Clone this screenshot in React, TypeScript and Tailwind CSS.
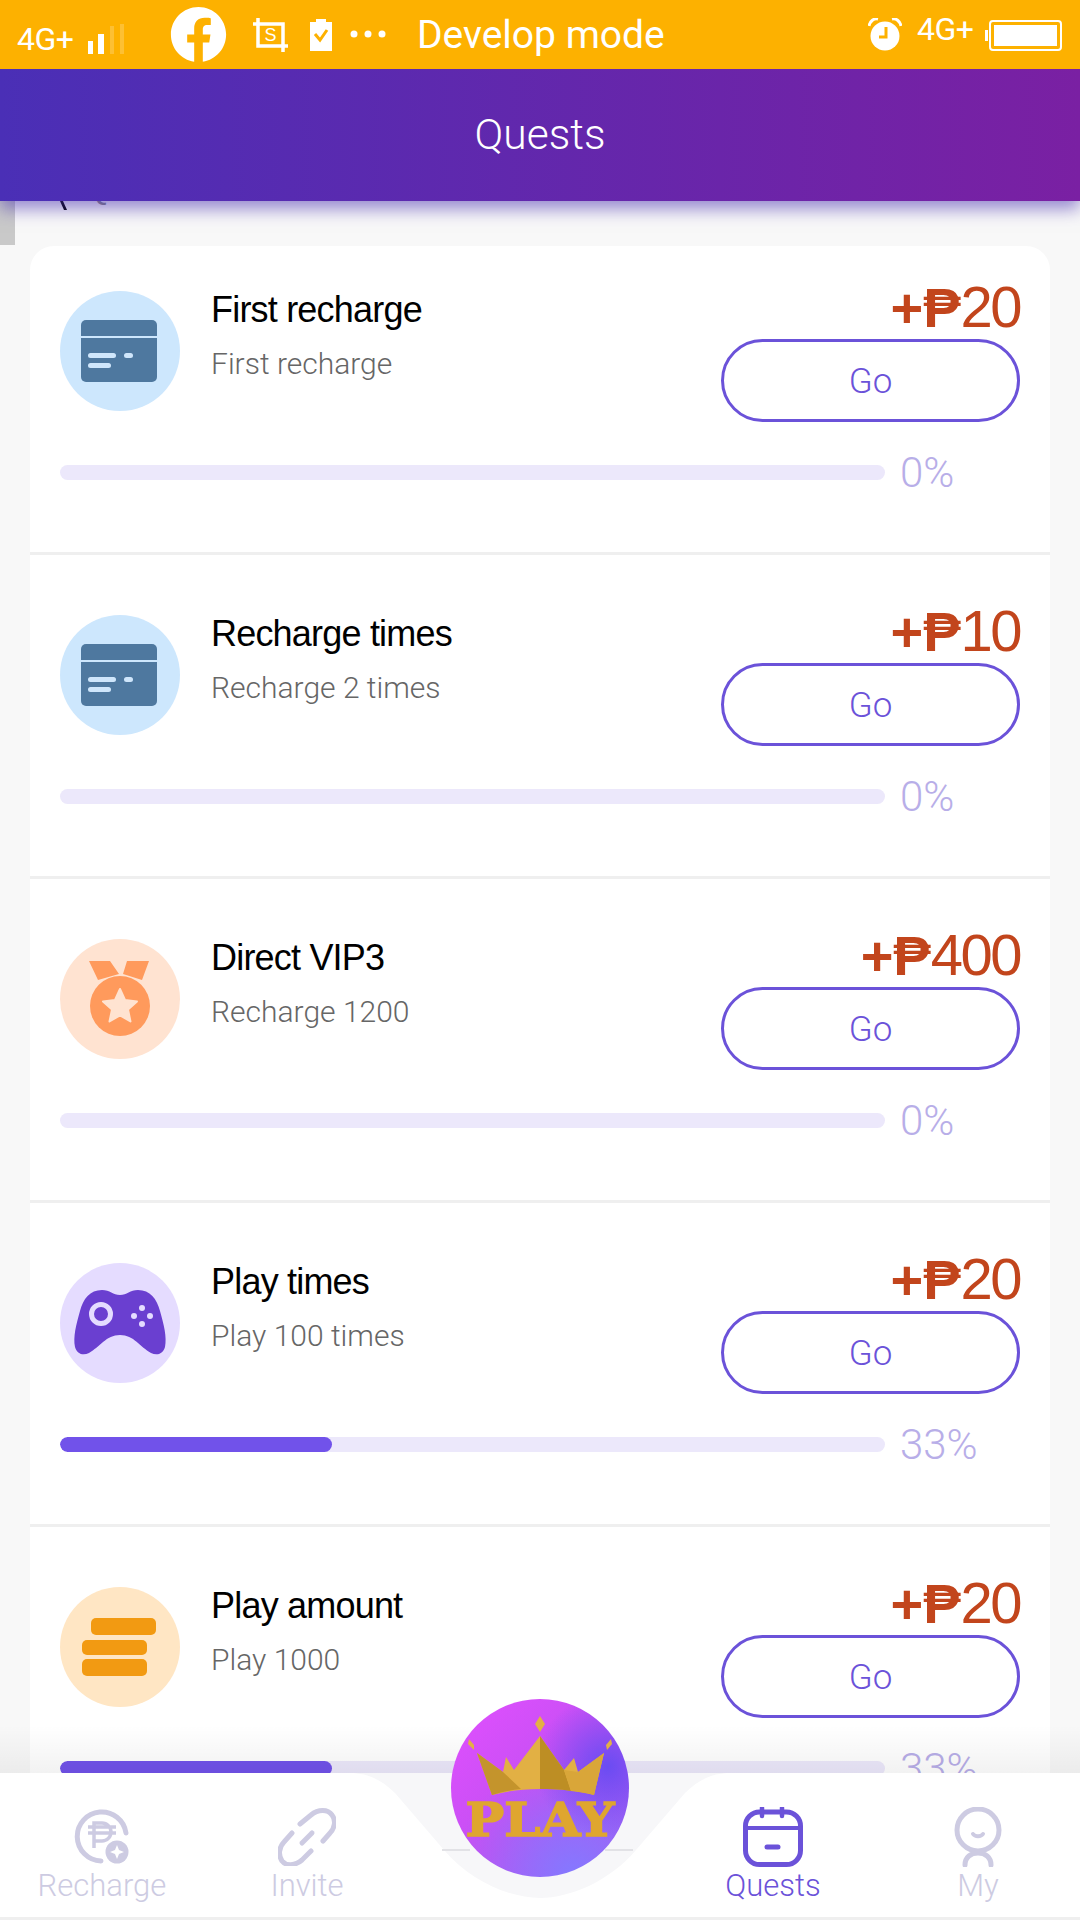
import React from "react";
import { FaFacebook } from "react-icons/fa";

const sans = "font-['Liberation_Sans',Arial,sans-serif]";
const light = "font-['Roboto','Liberation_Sans',sans-serif] font-light";

function CardIcon() {
  return (
    <svg viewBox="0 0 120 120" className="w-[120px] h-[120px]">
      <path d="M21 34a5 5 0 0 1 5-5h66a5 5 0 0 1 5 5v11H21z" fill="#4e789f" />
      <path d="M21 47h76v39a5 5 0 0 1-5 5H26a5 5 0 0 1-5-5z" fill="#4e789f" />
      <rect x="28" y="62" width="28" height="5" rx="2.500" fill="#cfe6fb" />
      <rect x="64" y="62" width="9" height="5" rx="2.500" fill="#cfe6fb" />
      <rect x="28" y="72" width="23" height="5" rx="2.500" fill="#cfe6fb" />
    </svg>
  );
}

function MedalIcon() {
  return (
    <svg viewBox="0 0 120 120" className="w-[120px] h-[120px]">
      <path d="M29 22h21l9 13-21 6zM67 22h22l-7 19-19-6z" fill="#ff9a5c" />
      <circle cx="60" cy="67" r="30" fill="#ff9a5c" />
      <path d="M60 50l5 11 12 1.500-9 8 2.500 12L60 76.500l-10.500 6 2.500-12-9-8 12-1.500z" fill="#ffe3d1" stroke="#ffe3d1" strokeWidth="2" strokeLinejoin="round" />
    </svg>
  );
}

function PadIcon() {
  return (
    <svg viewBox="0 0 120 120" className="w-[120px] h-[120px]">
      <path d="M42 27C50 27 53 32 60 32C67 32 70 27 78 27C90 27 97 36 100 48C104 62 107 74 105 84C103 91 97 93 91 90C80 84 74 72 60 72C46 72 40 84 29 90C23 93 17 91 15 84C13 74 16 62 20 48C23 36 30 27 42 27Z" fill="#6a3fd0" />
      <circle cx="41" cy="51" r="9.500" fill="#6a3fd0" stroke="#e5dcff" strokeWidth="5" />
      <circle cx="82" cy="45" r="3" fill="#e5dcff" />
      <circle cx="90" cy="53" r="3" fill="#e5dcff" />
      <circle cx="82" cy="61" r="3" fill="#e5dcff" />
      <circle cx="74" cy="53" r="3" fill="#e5dcff" />
    </svg>
  );
}

function StackIcon() {
  return (
    <svg viewBox="0 0 120 120" className="w-[120px] h-[120px]">
      <rect x="31" y="31" width="65" height="17" rx="5" fill="#f29a12" />
      <rect x="22" y="53" width="65" height="15" rx="5" fill="#f29a12" />
      <rect x="22" y="72" width="65" height="17" rx="5" fill="#f29a12" />
    </svg>
  );
}

type Task = { title: string; sub: string; amount: string; pct: number; bg: string; icon: React.ReactNode };

const tasks: Task[] = [
  { title: "First recharge", sub: "First recharge", amount: "20", pct: 0, bg: "bg-[#cde7fd]", icon: <CardIcon /> },
  { title: "Recharge times", sub: "Recharge 2 times", amount: "10", pct: 0, bg: "bg-[#cde7fd]", icon: <CardIcon /> },
  { title: "Direct VIP3", sub: "Recharge 1200", amount: "400", pct: 0, bg: "bg-[#ffe3d1]", icon: <MedalIcon /> },
  { title: "Play times", sub: "Play 100 times", amount: "20", pct: 33, bg: "bg-[#e5dcff]", icon: <PadIcon /> },
  { title: "Play amount", sub: "Play 1000", amount: "20", pct: 33, bg: "bg-[#ffe6c4]", icon: <StackIcon /> },
];

function TaskRow({ t, first }: { t: Task; first: boolean }) {
  return (
    <div className={`shrink-0 px-[30px] border-b-[3px] border-[#efefef] ${first ? "h-[309px] pt-[36px]" : "h-[324px] pt-[51px]"}`}>
      <div className="flex justify-between h-[140px]">
        <div className="flex items-start pt-[9px]">
          <div className={`w-[120px] h-[120px] rounded-full ${t.bg}`}>{t.icon}</div>
          <div className="ml-[31px]">
            <div className={`${sans} text-[36px] tracking-[-0.800px] leading-[40px] text-black mt-[-1px]`}>{t.title}</div>
            <div className={`${light} text-[30px] leading-[34px] text-[#666] mt-[17px]`}>{t.sub}</div>
          </div>
        </div>
        <div className="flex flex-col items-end w-[300px]">
          <div className={`${sans} h-[54px] text-[#c2451c] text-[58px] leading-[50px] tracking-[-2.500px] whitespace-nowrap`}>
            <span className="font-bold text-[56px] tracking-[0px]">+₱</span>
            {t.amount}
          </div>
          <div className="mt-[3px] w-[299px] h-[83px] rounded-full border-[3px] border-[#6b52d9] bg-white flex items-center justify-center">
            <span className={`${light} text-[#6b52d9] text-[35px] mt-[3px]`}>Go</span>
          </div>
        </div>
      </div>
      <div className="flex items-center h-[15px] mt-[43px]">
        <div className="w-[825px] h-[15px] rounded-full bg-[#ece8fb] overflow-hidden">
          <div className="h-full rounded-full bg-[#7152ea]" style={{ width: `${t.pct}%` }} />
        </div>
        <span className={`${light} ml-[15px] text-[#b8aee8] text-[42px] leading-[15px]`}>{t.pct}%</span>
      </div>
    </div>
  );
}

function StatusBar() {
  return (
    <div className="h-[69px] shrink-0 bg-[#fdb100] flex items-center text-white relative z-20">
      <span className={`${light} ml-[17px] text-[32px] font-normal mt-[9px] tracking-[-0.500px] w-[59px]`}>4G+</span>
      <svg viewBox="0 0 42 30" className="w-[42px] h-[30px] ml-[12px] mt-[9px]">
        <rect x="0" y="17" width="5" height="13" fill="#fff" />
        <rect x="10" y="10" width="6" height="20" fill="#fff" />
        <rect x="22" y="2" width="4" height="28" fill="#fff" opacity="0.2" />
        <rect x="32" y="0" width="4" height="30" fill="#fff" opacity="0.2" />
      </svg>
      <FaFacebook className="ml-[40px] text-white w-[57px] h-[57px]" />
      <svg viewBox="0 0 36 34" className="w-[36px] h-[34px] ml-[26px] mt-[1px]">
        <path d="M5 0v28h30M0 6h30v28" fill="none" stroke="#fff" strokeWidth="3.500" />
        <text x="17.500" y="23" textAnchor="middle" fontSize="18" fontFamily="Liberation Sans" fill="#fff">S</text>
      </svg>
      <svg viewBox="0 0 22 32" className="w-[22px] h-[32px] ml-[21px] mt-[1px]">
        <path d="M0 3h6V0h10v3h6v29H0z" fill="#fff" />
        <path d="M5 15l5 6 7-10" fill="none" stroke="#fdb100" strokeWidth="3" />
      </svg>
      <svg viewBox="0 0 36 8" className="w-[36px] h-[8px] ml-[18px] mb-[1px]">
        <circle cx="4" cy="4" r="3.500" fill="#fff" />
        <circle cx="18" cy="4" r="3.500" fill="#fff" />
        <circle cx="32" cy="4" r="3.500" fill="#fff" />
      </svg>
      <span className={`${light} ml-[31px] text-[39px] mt-[1px] font-normal w-[246px] whitespace-nowrap`}>Develop mode</span>
      <svg viewBox="0 0 34 33" className="w-[34px] h-[33px] ml-[205px] mt-[-1px]">
        <circle cx="17" cy="18" r="14.500" fill="#fff" />
        <path d="M1 8C2 3 6 0 10 1M33 8C32 3 28 0 24 1" fill="none" stroke="#fff" strokeWidth="3" />
        <path d="M18 9v10h-7" fill="none" stroke="#fdb100" strokeWidth="3" />
      </svg>
      <span className={`${light} ml-[15px] text-[32px] font-normal mt-[-12px] tracking-[-0.500px] w-[59px]`}>4G+</span>
      <svg viewBox="0 0 78 31" className="w-[78px] h-[31px] ml-[9px] mt-[1px]">
        <rect x="0" y="10" width="3" height="11" fill="#fff" />
        <rect x="5" y="1" width="71" height="29" rx="3" fill="none" stroke="#fff" strokeWidth="2" />
        <rect x="9" y="5" width="63" height="21" fill="#fff" />
      </svg>
    </div>
  );
}

function RechargeNav() {
  return (
    <svg viewBox="0 0 56 56" className="w-[56px] h-[56px]">
      <path d="M52 24A24.500 24.500 0 1 0 27 52" fill="none" stroke="#cdcbe2" strokeWidth="5" strokeLinecap="round" />
      <path d="M20 39V14h8a9 9 0 0 1 0 18h-8M14 18h28M14 24h28" fill="none" stroke="#cdcbe2" strokeWidth="3.500" />
      <circle cx="43" cy="43" r="13" fill="#fff" />
      <circle cx="43" cy="43" r="11.500" fill="#cdcbe2" />
      <path d="M43 36l2 5 5 2-5 2-2 5-2-5-5-2 5-2z" fill="#fff" />
    </svg>
  );
}

function InviteNav() {
  return (
    <svg viewBox="0 0 58 58" className="w-[58px] h-[58px]" fill="none" stroke="#cdcbe2" strokeWidth="5" strokeLinecap="round">
      <path d="M22 16L33 7C40 1 50 1 54 7C58 12 57 20 52 25L45 33" />
      <path d="M33 43L24 52C17 58 8 58 4 53C0 47 1 39 6 34L14 25" />
      <path d="M24 35L34 25" />
    </svg>
  );
}

function QuestsNav() {
  return (
    <svg viewBox="0 0 60 60" className="w-[60px] h-[60px]" fill="none" stroke="#6b52d9" strokeWidth="5" strokeLinecap="round">
      <rect x="2.500" y="5" width="55" height="52.500" rx="14" />
      <path d="M3 21H57" strokeWidth="4" />
      <path d="M19 1V9M39 1V9" strokeWidth="4.500" />
      <path d="M24 40H35" strokeWidth="5" />
    </svg>
  );
}

function MyNav() {
  return (
    <svg viewBox="0 0 48 60" className="w-[48px] h-[60px]" fill="none" stroke="#cdcbe2" strokeWidth="5" strokeLinecap="round">
      <circle cx="24" cy="23" r="21" />
      <path d="M19 27C21 30 27 30 29 27" strokeWidth="4" />
      <path d="M11 58C11 50 17 46 24 46C31 46 37 50 37 58" />
    </svg>
  );
}

function NavItem({ w, label, active, children }: { w: string; label: string; active?: boolean; children: React.ReactNode }) {
  return (
    <div className={`${w} flex flex-col items-center pt-[34px]`}>
      <div className="h-[60px] flex items-center">{children}</div>
      <span className={`${light} text-[31px] leading-[34px] mt-[2px] ${active ? "text-[#6b52d9]" : "text-[#cdcbe2]"}`}>{label}</span>
    </div>
  );
}

function PlayBadge() {
  return (
    <div className="absolute left-[451px] top-[1699px] w-[178px] h-[178px] rounded-full z-40 overflow-hidden bg-[radial-gradient(circle_at_88%_38%,#6a4cf2_0%,rgba(106,76,242,0)_38%),radial-gradient(circle_at_68%_98%,#8578ff_0%,rgba(133,120,255,0)_55%),linear-gradient(135deg,#e24fff_0%,#c250f2_55%,#a05cf0_100%)]">
      <svg viewBox="0 0 178 178" className="w-full h-full">
        <path d="M26 54L52 73L55 58L63 71L89 37L113 71L123 59L127 73L153 54L143 96C125 91 108 90 89 90C70 90 57 92 41 96Z" fill="#e2b044" />
        <path d="M26 54L52 73L70 90C60 91 50 93 41 96Z" fill="#c4942c" />
        <path d="M89 37L113 71L120 92C108 90 98 90 89 90Z" fill="#bd8e24" />
        <path d="M153 54L127 73L113 71L120 92C128 93 136 94 143 96Z" fill="#d9a639" />
        <path d="M89 17L94 25L89 33L84 25Z" fill="#e3b045" />
        <path d="M18 40L23 46L23 51L17 45Z" fill="#e3b045" />
        <path d="M160 40L161 45L156 51L155 46Z" fill="#e3b045" />
        <text x="89" y="137" textAnchor="middle" textLength="149" lengthAdjust="spacingAndGlyphs" fontFamily="DejaVu Serif" fontWeight="700" fontSize="47" stroke="#dfa62f" strokeWidth="1.500" fill="#dfa62f">PLAY</text>
      </svg>
    </div>
  );
}

export default function App() {
  return (
    <div className="relative w-[1080px] h-[1920px] overflow-hidden bg-[#f8f8f8] flex flex-col">
      <StatusBar />
      <div className="h-[132px] shrink-0 relative z-10 flex items-center justify-center bg-[linear-gradient(90deg,#4a2fb6,#7a20a3)] shadow-[0_8px_16px_rgba(70,45,175,0.55)]">
        <span className={`${light} text-white text-[42.500px]`}>Quests</span>
      </div>
      <div className="relative flex-1 min-h-0">
        <div className="absolute left-0 top-0 w-[15px] h-[44px] bg-[#c9c9c9]" />
        <div className="absolute left-[62px] top-0 w-[10px] h-[9px] border-l-[3px] border-black skew-x-[24deg]" />
        <span className={`${sans} absolute left-[84px] top-[-32px] text-[34px] leading-[36px] text-[#888]`}>Quests</span>
        <div className="ml-[30px] mt-[45px] w-[1020px] rounded-t-[24px] bg-white flex flex-col">
          {tasks.map((t, i) => (
            <TaskRow key={t.title} t={t} first={i === 0} />
          ))}
        </div>
      </div>
      <div className="absolute left-0 top-[1725px] w-[1080px] h-[48px] z-20 bg-[linear-gradient(180deg,rgba(0,0,0,0),rgba(0,0,0,0.05))]" />
      <div className="absolute left-0 top-[1773px] w-[1080px] h-[144px] z-30 bg-white flex">
        <NavItem w="w-[204px]" label="Recharge"><RechargeNav /></NavItem>
        <NavItem w="w-[206px]" label="Invite"><InviteNav /></NavItem>
        <div className="w-[260px] relative">
          <svg viewBox="0 0 380 130" className="absolute left-[-60px] top-0 w-[380px] h-[130px]">
            <path d="M0 0C15 0 30 5 45 20L94 77C120 108 160 125 190 125C220 125 260 108 286 77L335 20C350 5 365 0 380 0Z" fill="#f7f7f9" />
            <path d="M92 77H120M255 77H283" stroke="#e2e2e6" strokeWidth="2" />
          </svg>
        </div>
        <NavItem w="w-[206px]" label="Quests" active><QuestsNav /></NavItem>
        <NavItem w="w-[204px]" label="My"><MyNav /></NavItem>
      </div>
      <div className="absolute left-0 top-[1917px] w-[1080px] h-[3px] z-30 bg-[#efefef]" />
      <PlayBadge />
    </div>
  );
}
